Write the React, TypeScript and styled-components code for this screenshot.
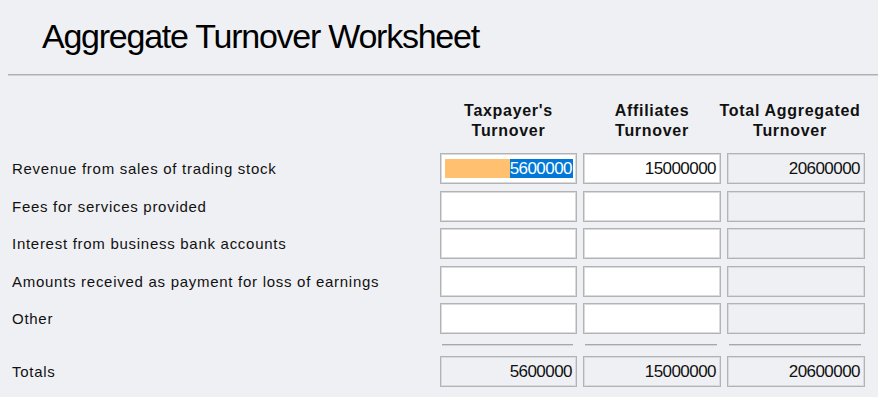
import React from "react";
import styled, { createGlobalStyle } from "styled-components";

const Global = createGlobalStyle`
  html, body { margin: 0; padding: 0; background: #eff0f4; }
  body { font-family: "Liberation Sans", Arial, sans-serif; color: #111; }
`;

const Page = styled.div`
  width: 878px;
  height: 397px;
  overflow: hidden;
  background: #eff0f4;
`;

const Title = styled.h1`
  margin: 0;
  padding: 18px 0 0 42px;
  font-size: 34px;
  line-height: 37px;
  font-weight: 400;
  letter-spacing: -1.25px;
  color: #000;
`;

const Rule = styled.div`
  margin: 19px 0 0 8px;
  height: 1px;
  background: #b0b0b0;
  border-bottom: 1px solid #d2d2d4;
`;

const COLS = "434px 137px 138px 138px";

const Grid = styled.div<{ $top: number }>`
  display: grid;
  grid-template-columns: ${COLS};
  column-gap: 6px;
  row-gap: 6.5px;
  margin-top: ${(p) => p.$top}px;
`;

const Header = styled.div`
  display: flex;
  flex-direction: column;
  align-items: center;
  font-size: 16px;
  font-weight: 700;
  line-height: 20px;
  letter-spacing: 0.7px;
  white-space: nowrap;
  color: #111;
`;

const HeaderShift = styled(Header)`
  padding-right: 12px;
`;

const Label = styled.div`
  display: flex;
  align-items: center;
  padding-left: 12px;
  font-size: 15px;
  letter-spacing: 0.72px;
  white-space: nowrap;
  color: #111;
`;

const Field = styled.div<{ $readonly?: boolean }>`
  box-sizing: border-box;
  height: 31px;
  display: flex;
  align-items: center;
  justify-content: flex-end;
  padding: 0 4px 0 4px;
  border: 1px solid #b3b3b6;
  box-shadow: inset 0 0 0 1px #dadadd;
  background: ${(p) => (p.$readonly ? "#eff0f4" : "#ffffff")};
  font-size: 17px;
  letter-spacing: -0.55px;
  color: #111;
`;

const FocusFill = styled.div`
  flex: 1;
  display: flex;
  justify-content: flex-end;
  align-items: center;
  height: 19px;
  margin-right: -1px;
  background: #ffc06f;
`;

const Selected = styled.span`
  height: 19px;
  line-height: 19px;
  background: #0078d7;
  color: #fff;
  padding-right: 1px;
`;

const SepGrid = styled.div`
  display: grid;
  grid-template-columns: ${COLS};
  column-gap: 6px;
  padding: 10px 0 10px;
`;

const SepLine = styled.div`
  margin: 0 4px 0 2px;
  height: 1px;
  background: #a8a8ab;
  border-bottom: 1px solid #d4d4d8;
`;

const rows = [
  "Revenue from sales of trading stock",
  "Fees for services provided",
  "Interest from business bank accounts",
  "Amounts received as payment for loss of earnings",
  "Other",
];

export default function App() {
  return (
    <Page>
      <Global />
      <Title>Aggregate Turnover Worksheet</Title>
      <Rule />
      <Grid $top={25}>
        <div />
        <Header>
          <span>Taxpayer's</span>
          <span>Turnover</span>
        </Header>
        <Header>
          <span>Affiliates</span>
          <span>Turnover</span>
        </Header>
        <HeaderShift>
          <span>Total Aggregated</span>
          <span>Turnover</span>
        </HeaderShift>
      </Grid>
      <Grid $top={12}>
        {rows.map((r, i) => (
          <React.Fragment key={r}>
            <Label>{r}</Label>
            {i === 0 ? (
              <>
                <Field>
                  <FocusFill>
                    <Selected>5600000</Selected>
                  </FocusFill>
                </Field>
                <Field>15000000</Field>
                <Field $readonly>20600000</Field>
              </>
            ) : (
              <>
                <Field />
                <Field />
                <Field $readonly />
              </>
            )}
          </React.Fragment>
        ))}
      </Grid>
      <SepGrid>
        <div />
        <SepLine />
        <SepLine />
        <SepLine />
      </SepGrid>
      <Grid $top={0}>
        <Label>Totals</Label>
        <Field $readonly>5600000</Field>
        <Field $readonly>15000000</Field>
        <Field $readonly>20600000</Field>
      </Grid>
    </Page>
  );
}
